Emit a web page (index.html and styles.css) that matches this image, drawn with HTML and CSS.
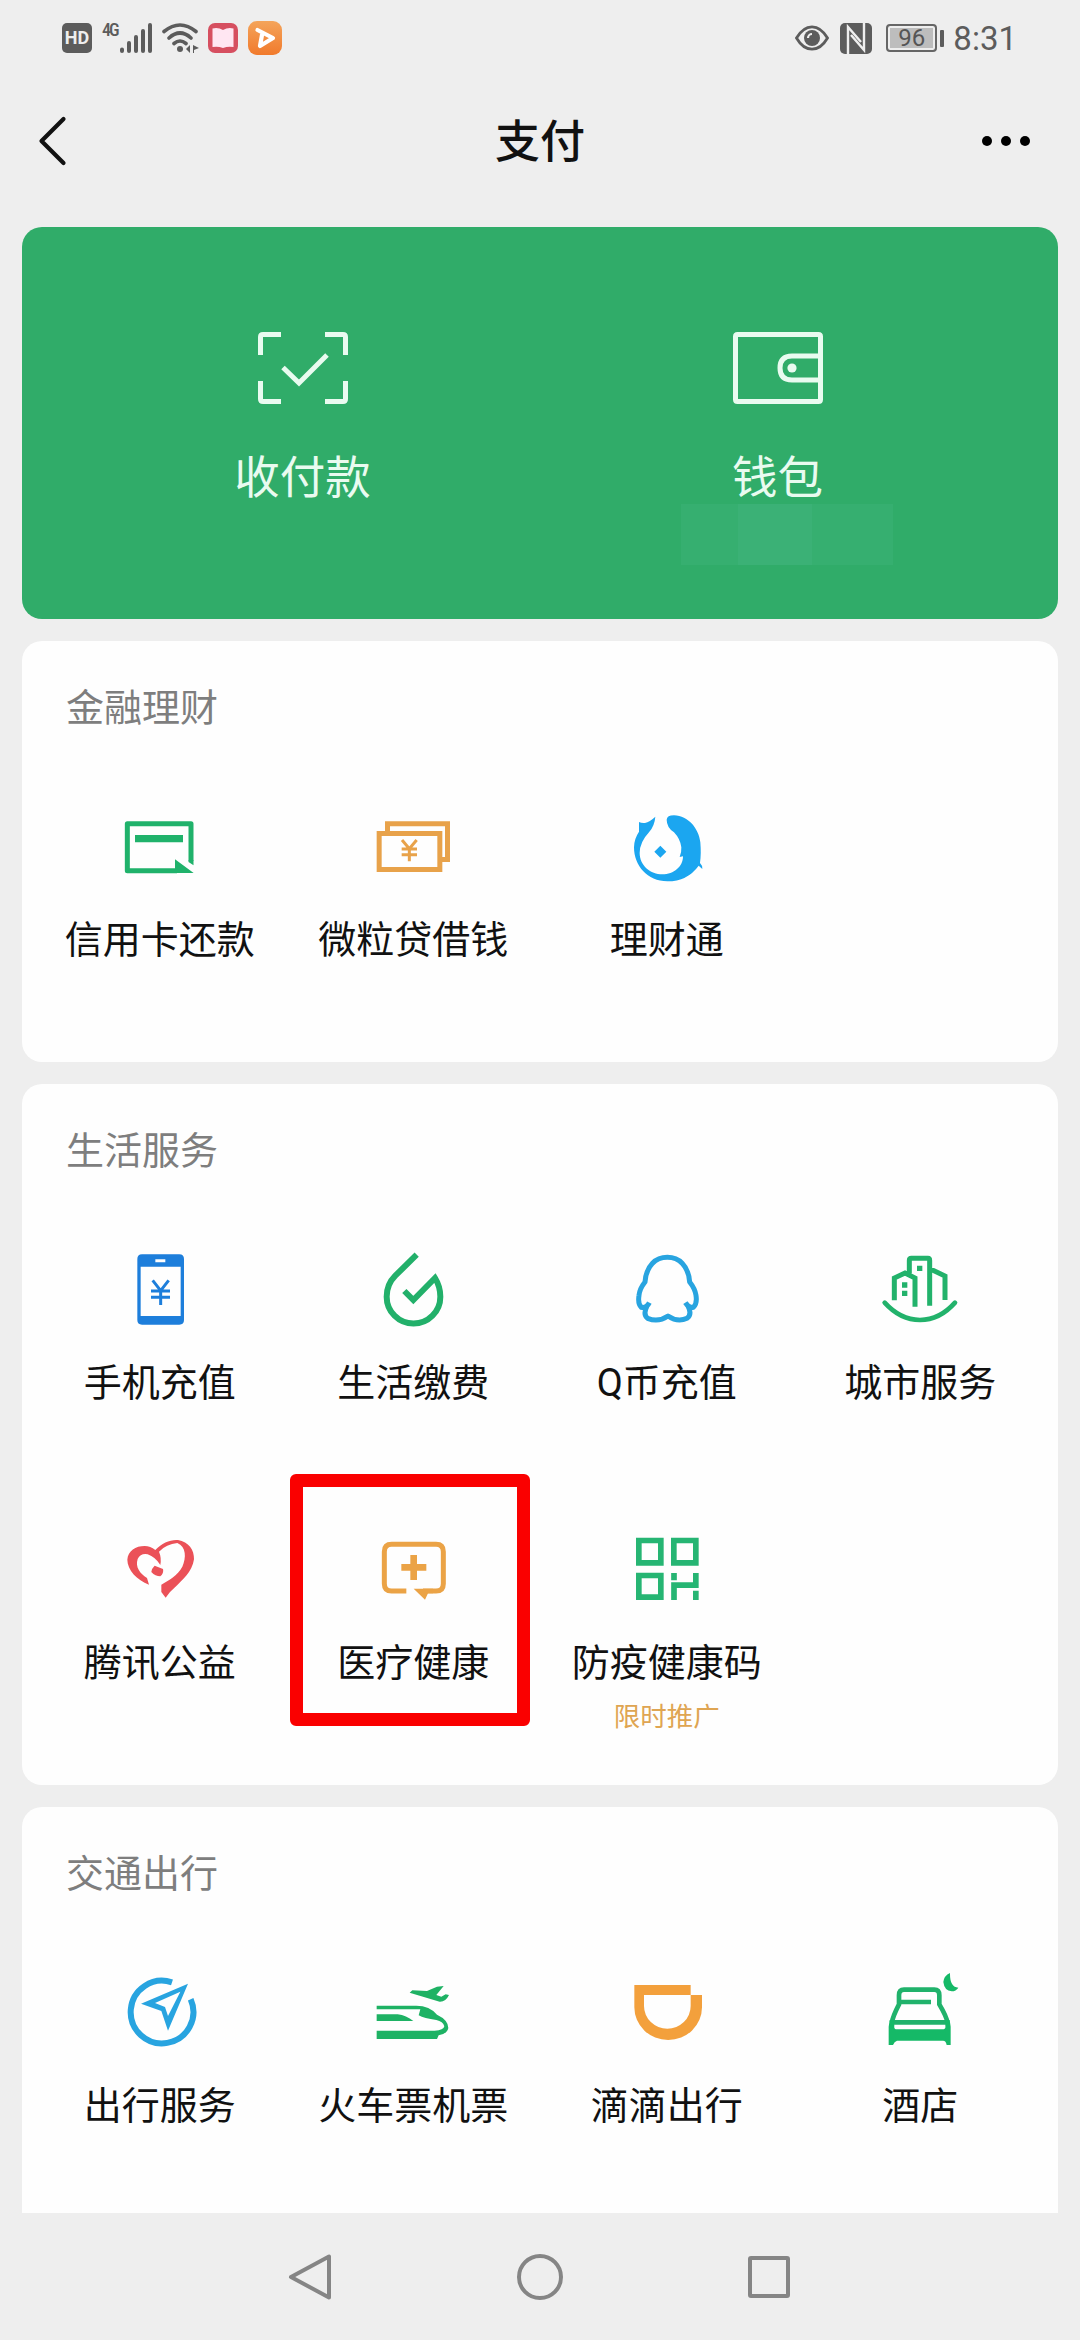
FILE: index.html
```html
<!DOCTYPE html>
<html lang="zh-CN">
<head>
<meta charset="utf-8">
<title>支付</title>
<link rel="stylesheet" href="styles.css">
</head>
<body>
<div class="screen">
  <div class="status">
    <div class="status-group">
      <span class="hd">HD</span>
      <span class="net">4G</span>
      <svg class="signal" viewBox="0 0 32 30"><path d="M2 26.500V28M9 20V28M16 14V28M23 8V28M30 2V28" fill="none" stroke="#5c5c5c" stroke-width="4" stroke-linecap="round"/></svg>
      <svg class="wifi" viewBox="0 0 37 30"><g fill="none" stroke="#5c5c5c" stroke-width="3.600" stroke-linecap="round"><path d="M2 8.500Q18 -4.500 34 8.500M7 15Q18 5 29 15M12 20.500Q18 15.500 24 20.500"/></g><circle cx="18" cy="26" r="3" fill="#5c5c5c"/><path d="M28 22v8l-4-4zM31 22v8l1 0v-3l5-2z" fill="#5c5c5c"/></svg>
      <svg class="app-red" viewBox="0 0 30 30"><rect width="30" height="30" rx="7" fill="#d64f60"/><path d="M4.500 5.500Q10 4 15 7Q20 4 25.500 5.500V24Q20 23 15 25Q10 23 4.500 24z" fill="#ffe6f2"/></svg>
      <svg class="app-orange" viewBox="0 0 34 34"><defs><linearGradient id="og" x2="0" y2="1"><stop stop-color="#f4a45a"/><stop offset="1" stop-color="#f17a2c"/></linearGradient></defs><rect width="34" height="34" rx="9" fill="url(#og)"/><path d="M9.500 9L25 17L12 25L14 14" fill="none" stroke="#fff" stroke-width="4.200" stroke-linejoin="round" stroke-linecap="round"/></svg>
    </div>
    <div class="status-group">
      <svg class="eye" viewBox="0 0 34 26"><path d="M1.500 13Q8 1.800 17 1.800T32.500 13Q26 24.200 17 24.200T1.500 13z" fill="none" stroke="#5c5c5c" stroke-width="2.800"/><circle cx="17" cy="13" r="8" fill="#5c5c5c"/><path d="M13 13a4 4 0 0 1 4-4" fill="none" stroke="#eee" stroke-width="2.200"/></svg>
      <svg class="nfc" viewBox="0 0 32 31"><rect width="32" height="31" rx="5" fill="#5c5c5c"/><path d="M8 31V4L21 19M24 0V27L11 12" stroke="#eee" stroke-width="2.400" fill="none"/></svg>
      <span class="battery">96</span><span class="battery-cap"></span>
      <span class="time">8:31</span>
    </div>
  </div>

  <header class="header">
    <svg class="back" viewBox="0 0 30 50"><path d="M25.500 3L3.500 25L25.500 47" fill="none" stroke="#111" stroke-width="4.200" stroke-linecap="round" stroke-linejoin="round"/></svg>
    <h1 class="header-title">支付</h1>
    <div class="more"><i></i><i></i><i></i></div>
  </header>

  <main class="cards">
    <section class="pay">
      <div class="pay-item">
        <svg class="pay-icon" viewBox="0 0 92 74"><path d="M3.500 24V6q0-2.500 2.500-2.500H24M68 3.500H86q2.500 0 2.500 2.500V24M88.500 50V68q0 2.500-2.500 2.500H68M24 70.500H6q-2.500 0-2.500-2.500V50M26 36.500L42 52L70 24" fill="none" stroke="#e9fbf0" stroke-width="5"/></svg>
        <span class="pay-label">收付款</span>
      </div>
      <div class="pay-item">
        <svg class="pay-icon" viewBox="0 0 92 74"><path d="M5.500 3.500H86.500Q88.500 3.500 88.500 5.500V68.500Q88.500 70.500 86.500 70.500H5.500Q3.500 70.500 3.500 68.500V5.500Q3.500 3.500 5.500 3.500zM88 25H60Q48 25 48 37T60 49H88" fill="none" stroke="#e9fbf0" stroke-width="5"/><circle cx="60" cy="37" r="4.600" fill="#e9fbf0"/></svg>
        <span class="pay-label">钱包</span>
        <div class="balance"><i></i><i></i><i></i></div>
      </div>
    </section>

    <section class="card finance">
      <h2 class="card-title">金融理财</h2>
      <div class="grid">
        <div class="cell">
          <svg class="icon" viewBox="215 537 288 288"><path d="M452 722V611H261V752H410" fill="none" stroke="#20b26b" stroke-width="15" stroke-linejoin="round"/><path d="M284 645H428V667H284zM404 718L460 759H404zM444.500 720H459.500V736L444.500 726z" fill="#20b26b"/></svg>
          <span class="label">信用卡还款</span>
        </div>
        <div class="cell">
          <svg class="icon" viewBox="976 537 288 288"><g fill="none" stroke="#e8a24a" stroke-width="15"><path d="M1018.500 640.500H1200.500V748.500H1018.500zM1043.500 633V611.500H1223.500V718.500H1208"/><path d="M1087 660L1109 686L1131 660M1109 684V724M1086 687H1132M1086 704H1132" stroke-width="9"/></g></svg>
          <span class="label">微粒贷借钱</span>
        </div>
        <div class="cell">
          <svg class="icon" viewBox="0 0 288 288"><path d="M109 53Q107 80 90 100Q62 130 62 162C62 200 95 226 130 226C165 226 192 203 192 172L182 174Q188 160 187 145Q184 120 165 100Q143 85 143 62Q144 49 165 49C208 50 240 90 244 130Q247 165 243 192Q250 198 250 210L239 200Q205 247 145 247C85 247 45 200 45 145Q45 120 60 98V69Q67 73 78 72Q92 69 109 53zM124 140L142 158L124 176L106 158z" fill="#1ba6f0"/></svg>
          <span class="label">理财通</span>
        </div>
      </div>
    </section>

    <section class="card life">
      <h2 class="card-title">生活服务</h2>
      <div class="grid">
        <div class="cell">
          <svg class="icon" viewBox="215 486 288 288"><path fill-rule="evenodd" d="M305 523H417Q431 523 431 537V720Q431 734 417 734H305Q291 734 291 720V537Q291 523 305 523zM301 560V708H421V560zM345 538V547H375V538z" fill="#1d7edb"/><path d="M337 601L361 632L385 601M361 630V675M332 633H389M332 652H389" fill="none" stroke="#1d7edb" stroke-width="9"/></svg>
          <span class="label">手机充值</span>
        </div>
        <div class="cell">
          <svg class="icon" viewBox="976 486 288 288"><path d="M1131 524L1067 587Q1041 613 1041 650A80 80 0 0 0 1202 650Q1202 620 1186 594L1121 660L1094 633" fill="none" stroke="#22b06a" stroke-width="18"/></svg>
          <span class="label">生活缴费</span>
        </div>
        <div class="cell">
          <svg class="icon" viewBox="176 486 288 288"><path d="M267 668Q259 685 243 682Q232 672 236 646Q238 626 254 606C258 556 286 532 321 532S384 556 388 606Q404 626 407 646Q411 672 399 682Q386 685 375 668M260 678Q247 703 262 715Q294 728 323 708Q352 728 380 715Q396 703 383 678" fill="none" stroke="#28a4e0" stroke-width="15" stroke-linejoin="round"/></svg>
          <span class="label">Q币充值</span>
        </div>
        <div class="cell">
          <svg class="icon" viewBox="937 486 288 288"><path d="M975 668Q1022 720 1081 720T1186 668" fill="none" stroke="#22b26b" stroke-width="14" stroke-linecap="round"/><path d="M1004 661V594L1036 579L1066 594V680M1049 580V541Q1049 535 1055 535H1105Q1110 535 1110 541V677M1112 567L1156 588V660" fill="none" stroke="#22b26b" stroke-width="15"/><path d="M1072 557H1088V573H1072zM1027 607H1043V623H1027zM1027 632H1043V648H1027z" fill="#22b26b"/></svg>
          <span class="label">城市服务</span>
        </div>
        <div class="cell">
          <svg class="icon" viewBox="215 216 288 288"><path d="M326 404C290 390 261 360 261 329C263 302 286 288 313 288Q330 288 345 300C365 279 390 268 413 270C445 275 462 300 461 328C456 366 424 392 404 412Q386 427 376 443L363 426V404C386 390 411 377 426 350C438 324 438 290 411 279Q378 282 356 305Q364 323 360 345Q345 321 322 313Q301 309 292 327C284 351 299 371 320 384z" fill="#eb5158"/><path d="M343 347L368 357Q371 370 360 379Q345 379 333 366Q334 355 343 347z" fill="#eb5158"/></svg>
          <span class="label">腾讯公益</span>
        </div>
        <div class="cell">
          <svg class="icon" viewBox="976 216 288 288"><path d="M1100 423H1056Q1034 423 1034 401V305Q1034 283 1056 283H1189Q1211 283 1211 305V401Q1211 423 1189 423H1150" fill="none" stroke="#eba346" stroke-width="15"/><path d="M1122 416H1180V430H1165L1156 449zM1112 315H1132V342H1160V362H1132V390H1112V362H1085V342H1112z" fill="#eba346"/></svg>
          <span class="label">医疗健康</span>
          <div class="highlight"></div>
        </div>
        <div class="cell">
          <svg class="icon" viewBox="236 216 288 288"><path d="M295.500 271.500H361.500V338.500H295.500zM400.500 271.500H466.500V338.500H400.500zM295.500 376.500H361.500V441.500H295.500zM401 369V391M466.500 369V405.500H401V450M466.500 422V450" fill="none" stroke="#26b573" stroke-width="17"/></svg>
          <span class="label">防疫健康码</span>
          <span class="promo">限时推广</span>
        </div>
      </div>
    </section>

    <section class="card travel">
      <h2 class="card-title">交通出行</h2>
      <div class="grid">
        <div class="cell">
          <svg class="icon shift-left" viewBox="215 495 288 288"><path d="M398 547A94 94 0 1 0 454 598" fill="none" stroke="#28a4e0" stroke-width="18"/><path fill-rule="evenodd" d="M446 551L386 692L366 633L305 611zM423 575L347 609L377 621L386 648z" fill="#28a4e0"/></svg>
          <span class="label">出行服务</span>
        </div>
        <div class="cell">
          <svg class="icon" viewBox="976 495 288 288"><path d="M1011 617H1130Q1170 617 1192 644Q1226 660 1226 684Q1222 702 1197 706L1192 717H1011V692H1185Q1212 691 1214 679Q1210 664 1190 660Q1153 655 1137 646L1142 628H1011zM1011 643H1074Q1100 646 1121 663H1011zM1110 578L1118 571L1162 573L1192 560L1212 558L1190 585L1205 590L1218 583L1228 585Q1218 606 1200 605z" fill="#1eb264"/></svg>
          <span class="label">火车票机票</span>
        </div>
        <div class="cell">
          <svg class="icon" viewBox="176 195 288 288"><path fill-rule="evenodd" d="M222 255H391V285H425V322A101.500 98 0 0 1 222 322zM251 285V318A70 68 0 0 0 391 318V285z" fill="#f3a03c"/></svg>
          <span class="label">滴滴出行</span>
        </div>
        <div class="cell">
          <svg class="icon" viewBox="937 195 288 288"><path d="M997 367Q999 350 1018 313V286Q1018 269 1033 269H1124Q1139 269 1139 286V313Q1161 350 1163 367M1022 306H1114M997 367H1163" fill="none" stroke="#20b26b" stroke-width="14"/><path d="M990 360H1003L1004 378Q1002 388 1012 388H1148Q1159 388 1157 378V360H1170L1173 380V435H1161Q1159 422 1150 422H1012Q1004 425 1000 435H987V380zM1171 219Q1153 227 1151 246Q1154 272 1176 274Q1189 274 1196 263Q1170 262 1171 219z" fill="#15b967"/></svg>
          <span class="label">酒店</span>
        </div>
      </div>
    </section>
  </main>

  <nav class="navbar">
    <svg class="nav-icon" viewBox="0 0 50 50"><path d="M43 4.500V45.500L5 25z" fill="none" stroke="#858585" stroke-width="4" stroke-linejoin="round"/></svg>
    <svg class="nav-icon" viewBox="0 0 50 50"><circle cx="25" cy="25" r="21" fill="none" stroke="#858585" stroke-width="4"/></svg>
    <svg class="nav-icon" viewBox="0 0 50 50"><rect x="6" y="6" width="38" height="38" rx="1" fill="none" stroke="#858585" stroke-width="4"/></svg>
  </nav>
</div>
</body>
</html>
```
FILE: styles.css
```css
* {
  box-sizing: border-box;
}

body {
  margin: 0;
  background: #eee;
  font-family: Roboto, "Noto Sans CJK SC", sans-serif;
  color: #111;
}

svg {
  display: block;
  flex: none;
}

.screen {
  width: 1080px;
  height: 2340px;
  display: flex;
  flex-direction: column;
  overflow: hidden;
}

/* Status bar */
.status {
  height: 76px;
  padding: 0 63px 0 62px;
  display: flex;
  justify-content: space-between;
  color: #5c5c5c;
}

.status-group {
  display: flex;
  align-items: center;
}

.hd {
  width: 30px;
  height: 30px;
  border-radius: 5px;
  background: #5c5c5c;
  color: #eee;
  font: 700 18px/30px Roboto, sans-serif;
  text-align: center;
}

.net {
  width: 18px;
  margin: 0 0 16px 10px;
  font: 500 18px/18px "Roboto Condensed", Roboto, sans-serif;
  letter-spacing: -2px;
}

.signal {
  width: 32px;
  height: 30px;
}

.wifi {
  width: 37px;
  height: 30px;
  margin-left: 10px;
}

.app-red {
  width: 30px;
  height: 30px;
  margin-left: 9px;
}

.app-orange {
  width: 34px;
  height: 34px;
  margin-left: 10px;
}

.eye {
  width: 34px;
  height: 26px;
}

.nfc {
  width: 32px;
  height: 31px;
  margin-left: 11px;
}

.battery {
  width: 51px;
  height: 28px;
  margin-left: 14px;
  border: 2px solid #666;
  border-radius: 4px;
  background: #bdbdbd;
  box-shadow: inset 0 0 0 2px #eee;
  color: #555;
  font: 400 24px/24px Roboto, sans-serif;
  text-align: center;
}

.battery-cap {
  width: 4px;
  height: 17px;
  margin-left: 3px;
  border-radius: 1px;
  background: #5c5c5c;
}

.time {
  margin-left: 9px;
  padding-top: 1px;
  font: 400 33px/40px Roboto, sans-serif;
}

/* Title bar */
.header {
  height: 151px;
  padding: 0 50px 22px 38px;
  display: grid;
  grid-template-columns: 1fr auto 1fr;
  align-items: center;
}

.back {
  width: 30px;
  height: 50px;
}

.header-title {
  margin: 0;
  padding: 5px 0 0 12px;
  font-size: 45px;
  line-height: 60px;
  font-weight: 500;
}

.more {
  display: flex;
  justify-content: flex-end;
  gap: 9px;
}

.more i {
  width: 10px;
  height: 10px;
  border-radius: 50%;
  background: #000;
}

/* Cards */
.cards {
  flex: 1;
  min-height: 0;
  padding: 0 22px;
  display: flex;
  flex-direction: column;
  gap: 22px;
}

.pay {
  height: 392px;
  flex: none;
  padding: 104px 43px 0;
  display: grid;
  grid-template-columns: 1fr 1fr;
  border-radius: 20px;
  background: #30ac69;
  color: #e9fbf0;
}

.pay-item {
  display: flex;
  flex-direction: column;
  align-items: center;
}

.pay-icon {
  width: 92px;
  height: 74px;
}

.pay-label {
  margin-top: 44px;
  font-size: 45.5px;
  line-height: 60px;
}

.balance {
  width: 212px;
  height: 61px;
  margin: -5px 0 0 19px;
  display: grid;
  grid-template-columns: 57px 74px 81px;
}

.balance i {
  background: #36af70;
}

.balance i:nth-child(2) {
  background: #3bb176;
}

.card {
  flex: none;
  padding: 42px 11px 0;
  border-radius: 20px;
  background: #fefefe;
}

.finance {
  height: 421px;
}

.life {
  height: 701px;
}

.travel {
  height: 406px;
  border-radius: 20px 20px 0 0;
}

.card-title {
  margin: 0 33px 66px;
  color: #7e7e7e;
  font-size: 38px;
  line-height: 50px;
  font-weight: 400;
}

.grid {
  display: grid;
  grid-template-columns: repeat(4, 1fr);
  grid-auto-rows: 280px;
}

.cell {
  position: relative;
  display: flex;
  flex-direction: column;
  align-items: center;
}

.icon {
  width: 96px;
  height: 96px;
}

.shift-left {
  margin-right: 2px;
}

.label {
  margin-top: 20px;
  font-size: 38px;
  line-height: 50px;
  white-space: nowrap;
}

.promo {
  margin-top: 12px;
  color: #dfa552;
  font-size: 26.5px;
  line-height: 34px;
}

.highlight {
  position: absolute;
  top: -48px;
  left: 3.5px;
  width: 240px;
  height: 252px;
  border: 13px solid #fa0000;
  border-radius: 6px;
}

/* System navigation */
.navbar {
  height: 127px;
  flex: none;
  display: flex;
  justify-content: center;
  align-items: center;
  gap: 179px;
}

.nav-icon {
  width: 50px;
  height: 50px;
}
```
